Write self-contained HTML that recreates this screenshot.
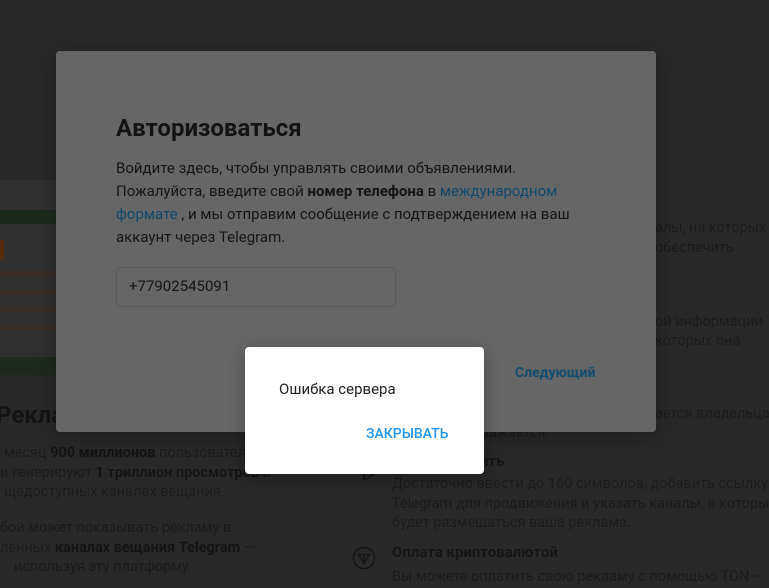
<!DOCTYPE html>
<html><head><meta charset="utf-8"><style>
*{margin:0;padding:0;box-sizing:border-box}
body{width:769px;height:588px;overflow:hidden;background:#292929;font-family:"Roboto","Liberation Sans",sans-serif;position:relative}
.a{position:absolute;white-space:nowrap}
.bg{color:#1b1b1b;font-size:14.5px;line-height:19.5px}
.bg b{color:#141414}
.m{position:absolute;left:56px;top:51px;width:600px;height:381px;background:#666;border-radius:4px;box-shadow:0 4px 20px rgba(0,0,0,.3)}
.mt{color:#151515;font-size:15px;line-height:23.5px}
.lk{color:#0f4a6b}
</style></head><body>
<div class="a" style="left:0;top:180px;width:56px;height:195px;background:#303030"></div>
<div class="a" style="left:0;top:210px;width:56px;height:14px;background:#1c2a1e"></div>
<div class="a" style="left:0;top:240px;width:4px;height:20px;background:#5a2a08;border-radius:3px"></div>
<div class="a" style="left:0;top:271px;width:56px;height:5px;background:#3a2e26"></div>
<div class="a" style="left:0;top:290px;width:56px;height:5px;background:#3a2e26"></div>
<div class="a" style="left:0;top:307px;width:56px;height:5px;background:#3a2e26"></div>
<div class="a" style="left:0;top:325px;width:56px;height:5px;background:#3a2e26"></div>
<div class="a" style="left:0;top:357px;width:56px;height:18px;background:#1e2a1d"></div>
<div class="a" style="left:-4px;top:401px;font-size:24px;font-weight:bold;color:#141414">Рекла</div>
<div class="a bg" style="left:4px;top:443px">месяц <b>900 миллионов</b> пользователей</div>
<div class="a bg" style="left:0;top:463px">и генерируют <b>1 триллион просмотров</b> в</div>
<div class="a bg" style="left:4px;top:482px">щедоступных каналах вещания.</div>
<div class="a bg" style="left:0;top:518px">бой может показывать рекламу в</div>
<div class="a bg" style="left:0;top:538px">ленных <b>каналах вещания Telegram</b> —</div>
<div class="a bg" style="left:14px;top:557px">используя эту платформу.</div>
<div class="a bg" style="left:655px;top:218px">алы, на которых</div>
<div class="a bg" style="left:655px;top:238px">обеспечить</div>
<div class="a bg" style="left:655px;top:312px">ой информации</div>
<div class="a bg" style="left:655px;top:331px">которых она</div>
<div class="a bg" style="left:655px;top:404px">ается владельцам</div>
<div class="a bg" style="left:430px;top:423px">на отображается.</div>
<div class="a bg" style="left:480px;top:452px;font-weight:bold;color:#141414;font-size:15px">ить</div>
<svg class="a" style="left:360px;top:460px" width="20" height="22"><path d="M3 20 L5 14 L15 4 M3 20 L9 18 L19 8" stroke="#151515" stroke-width="1.6" fill="none"/></svg>
<div class="a bg" style="left:392px;top:474px">Достаточно ввести до 160 символов, добавить ссылку в</div>
<div class="a bg" style="left:392px;top:494px">Telegram для продвижения и указать каналы, в которых</div>
<div class="a bg" style="left:392px;top:513px">будет размещаться ваша реклама.</div>
<svg class="a" style="left:352px;top:546px" width="24" height="24"><circle cx="12" cy="12" r="10.5" stroke="#151515" stroke-width="1.6" fill="none"/><path d="M6.5 8.5 H17.5 L12 17.5 Z M12 8.5 V17.5" stroke="#151515" stroke-width="1.6" fill="none"/></svg>
<div class="a" style="left:392px;top:543px;font-weight:bold;color:#141414;font-size:15px">Оплата криптовалютой</div>
<div class="a bg" style="left:392px;top:567px">Вы можете оплатить свою рекламу с помощью TON —</div>
<div class="m"></div>
<div class="a" style="left:116px;top:114px;font-size:24px;font-weight:bold;color:#131313">Авторизоваться</div>
<div class="a mt" style="left:116px;top:157px">Войдите здесь, чтобы управлять своими объявлениями.</div>
<div class="a mt" style="left:116px;top:180px">Пожалуйста, введите свой <b>номер телефона</b> в <span class="lk">международном</span></div>
<div class="a mt" style="left:116px;top:203px"><span class="lk">формате</span> , и мы отправим сообщение с подтверждением на ваш</div>
<div class="a mt" style="left:116px;top:226px">аккаунт через Telegram.</div>
<div class="a" style="left:116px;top:267px;width:280px;height:40px;border:1px solid #5a5a5a;border-radius:5px"></div>
<div class="a mt" style="left:129px;top:275px">+77902545091</div>
<div class="a" style="left:515px;top:365px;font-size:14px;font-weight:bold;color:#104d70">Следующий</div>
<div class="a" style="left:245px;top:347px;width:239px;height:127px;background:#fff;border-radius:4px;box-shadow:0 4px 16px rgba(0,0,0,.3)"></div>
<div class="a" style="left:279px;top:380px;font-size:15px;color:#222">Ошибка сервера</div>
<div class="a" style="left:366px;top:426px;font-size:14px;color:#2196f3;font-weight:500">ЗАКРЫВАТЬ</div>
</body></html>
